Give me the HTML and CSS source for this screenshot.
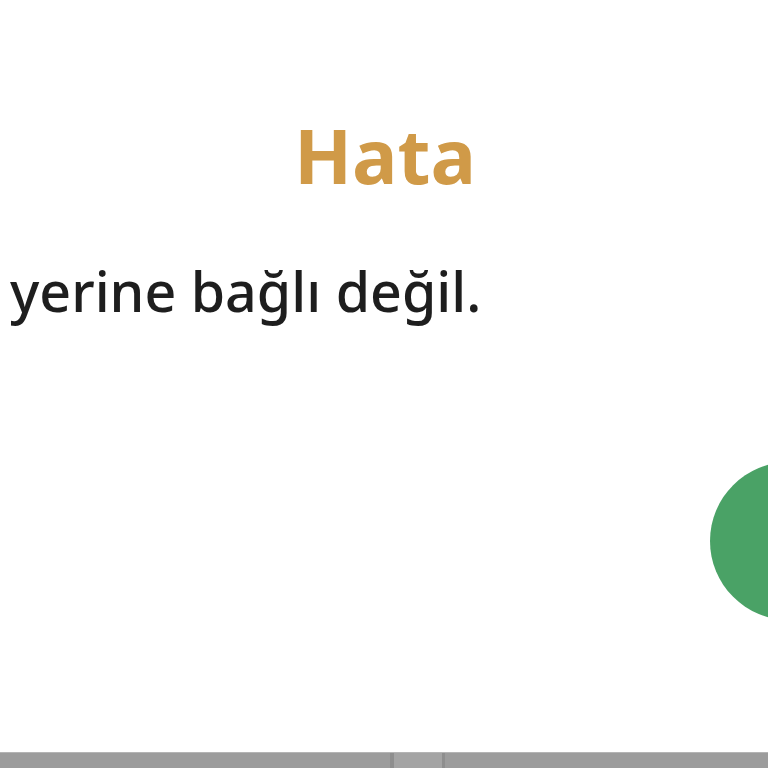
FILE: index.html
```html
<!DOCTYPE html>
<html lang="tr">
<head>
<meta charset="utf-8">
<title>Hata</title>
<link rel="stylesheet" href="styles.css">
</head>
<body>
<div class="screen">
  <div class="dialog">
    <h1 class="title">Hata</h1>
    <p class="message">yerine bağlı değil.</p>
    <div class="fab"></div>
  </div>
  <div class="bottom-bar">
    <div class="bar-seg bar-left"></div>
    <div class="bar-seg bar-mid"></div>
    <div class="bar-seg bar-right"></div>
  </div>
</div>
</body>
</html>
```
FILE: styles.css
```css
html, body {
  margin: 0;
  padding: 0;
  width: 768px;
  height: 768px;
  overflow: hidden;
  background: #ffffff;
}
.screen {
  width: 768px;
  height: 768px;
  display: flex;
  flex-direction: column;
}
.dialog {
  flex: 1;
  position: relative;
  overflow: hidden;
}
.title {
  margin: 0;
  padding-top: 107px;
  padding-left: 2px;
  text-align: center;
  font-family: "Noto Sans", sans-serif;
  font-weight: 700;
  font-size: 76px;
  line-height: 96px;
  color: #d09a48;
}
.message {
  margin: 0;
  margin-top: 52px;
  padding-left: 10px;
  font-family: "Noto Sans", sans-serif;
  font-weight: 500;
  font-size: 55.5px;
  line-height: 72px;
  color: #1e1e1e;
  white-space: nowrap;
}
.fab {
  position: absolute;
  left: 710px;
  top: 462px;
  width: 158px;
  height: 158px;
  border-radius: 50%;
  background: #4aa266;
}
.bottom-bar {
  height: 15px;
  display: flex;
  background: #9c9c9c;
  border-top: 1px solid #b4b4b4;
}
.bar-seg { height: 100%; }
.bar-left { width: 390px; }
.bar-mid {
  width: 48px;
  border-left: 4px solid #8e8e8e;
  border-right: 3px solid #8e8e8e;
  background: #a4a4a4;
}
.bar-right { flex: 1; }
```
